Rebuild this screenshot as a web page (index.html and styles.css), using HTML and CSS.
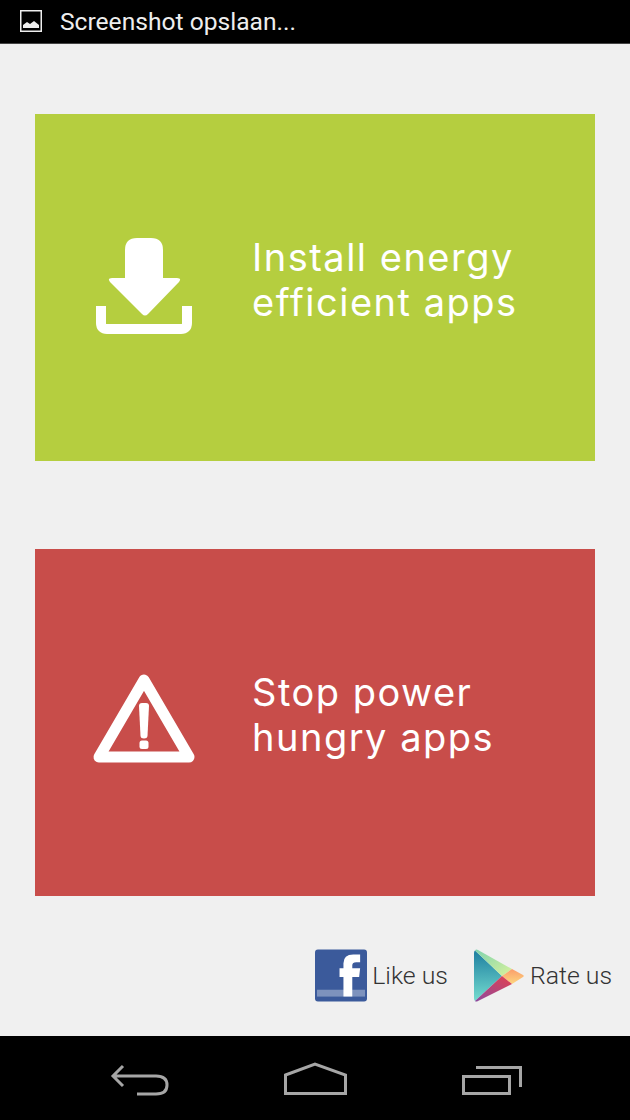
FILE: index.html
```html
<!DOCTYPE html>
<html lang="en">
<head>
  <meta charset="UTF-8">
  <title>Battery saver</title>
  <link rel="stylesheet" href="styles.css">
</head>
<body>

<div class="status-bar">
  <svg class="status-icon" width="22" height="22" viewBox="0 0 22 22">
    <rect x="0.75" y="0.75" width="20.5" height="20.5" fill="none" stroke="#eee" stroke-width="1.5"/>
    <path d="M3 18 V15 L7 12 L10 14 L14 11 L19 15 V18 Z" fill="#eee"/>
  </svg>
  <span class="status-text">Screenshot opslaan...</span>
</div>

<main class="content">
  <a class="tile tile-green">
    <svg class="tile-icon" width="110" height="110" viewBox="0 0 110 110">
      <path d="M35 17 Q35 5 47 5 H61 Q73 5 73 17 V45 H87 Q92 45 89 49 L58 81 Q55 84 52 81 L20 49 Q17 45 22 45 H35 Z" fill="#fff"/>
      <path d="M11 73 V90 Q11 96 17 96 H91 Q97 96 97 90 V73" fill="none" stroke="#fff" stroke-width="10"/>
    </svg>
    <span class="tile-text">Install energy<br>efficient apps</span>
  </a>

  <a class="tile tile-red">
    <svg class="tile-icon" width="110" height="110" viewBox="0 0 110 110">
      <polygon points="54,12 9,89 99,89" fill="none" stroke="#fff" stroke-width="11" stroke-linejoin="round"/>
      <path d="M49 38 Q49 35 52 35 H56 Q59 35 59 38 L57.500 68 Q57.200 70.500 54 70.500 Q50.800 70.500 50.500 68 Z" fill="#fff"/>
      <rect x="49.5" y="72.5" width="9" height="8.5" rx="2.5" fill="#fff"/>
    </svg>
    <span class="tile-text">Stop power<br>hungry apps</span>
  </a>

  <div class="social">
    <a class="social-link">
      <svg width="52" height="53" viewBox="0 0 53 53">
        <rect width="53" height="53" rx="3" fill="#3b5a9b"/>
        <rect x="2" y="41" width="49" height="7" fill="#7d92bd"/>
        <path d="M29 48 V28 H25 V19 H29 V14 Q29 5 39 5 H46 V13 H42 Q38 13 38 16 V19 H46 L45 28 H38 V48 Z" fill="#fff"/>
      </svg>
      <span class="social-text">Like us</span>
    </a>
    <a class="social-link">
      <svg width="51" height="53" viewBox="0 0 51 53">
        <defs>
          <linearGradient id="playBlue" x1="0" y1="0" x2="0" y2="1">
            <stop offset="0" stop-color="#1d7ea0"/>
            <stop offset="1" stop-color="#74dccf"/>
          </linearGradient>
          <linearGradient id="playGreen" x1="0" y1="0" x2="1" y2="1">
            <stop offset="0" stop-color="#7fd3ae"/>
            <stop offset="1" stop-color="#d8f29c"/>
          </linearGradient>
          <linearGradient id="playOrange" x1="0" y1="0" x2="0" y2="1">
            <stop offset="0" stop-color="#fb9d6b"/>
            <stop offset="1" stop-color="#fdd67f"/>
          </linearGradient>
          <linearGradient id="playRed" x1="1" y1="0" x2="0" y2="1">
            <stop offset="0" stop-color="#e2404f"/>
            <stop offset="1" stop-color="#8d4aa0"/>
          </linearGradient>
        </defs>
        <path d="M1 1.500 Q0 2 0 4 V49 Q0 51 1 52 L28 27 Z" fill="url(#playBlue)"/>
        <path d="M1 1.500 Q2 0 4 1 L38 20 L28 27 Z" fill="url(#playGreen)"/>
        <path d="M38 20 L49 26 Q50.500 27 49 28 L38 35 L28 27 Z" fill="url(#playOrange)"/>
        <path d="M1 52 Q2 53 4 52 L38 35 L28 27 Z" fill="url(#playRed)"/>
      </svg>
      <span class="social-text">Rate us</span>
    </a>
  </div>
</main>

<nav class="nav-bar">
  <svg width="60" height="36" viewBox="0 0 60 36">
    <path d="M13 4 L3 14 L13 24 M3 14 H46 Q57 14 57 23 Q57 32 46 32 H27" fill="none" stroke="#a6a6a6" stroke-width="3"/>
  </svg>
  <svg width="64" height="36" viewBox="0 0 64 36">
    <path d="M1.500 13 L31 2 L61.500 13 V31.500 H1.500 Z" fill="none" stroke="#a6a6a6" stroke-width="3"/>
  </svg>
  <svg width="60" height="36" viewBox="0 0 60 36">
    <path d="M1.500 14.500 H47.500 V31.500 H1.500 Z M14 5.500 H58.500 V25" fill="none" stroke="#a6a6a6" stroke-width="3"/>
  </svg>
</nav>

</body>
</html>
```

FILE: styles.css
```css
* {
  box-sizing: border-box;
}

body {
  margin: 0;
  width: 630px;
  height: 1120px;
  display: flex;
  flex-direction: column;
  background-color: #f0f0f0;
  font-family: Roboto, sans-serif;
}

.status-bar {
  height: 44px;
  display: flex;
  align-items: center;
  gap: 18px;
  padding: 0 0 1px 20px;
  background-color: #000;
  border-bottom: 1px solid #444;
}

.status-text {
  font-size: 24.6px;
  color: #eee;
}

.content {
  flex: 1;
  display: flex;
  flex-direction: column;
  padding: 70px 35px 0;
}

.tile {
  height: 347px;
  display: flex;
  align-items: center;
  gap: 52px;
  padding-left: 55px;
  color: #fff;
}

.tile-green {
  background-color: #b5ce3f;
}

.tile-red {
  margin-top: 88px;
  background-color: #c84d4a;
}

.tile-text {
  margin-bottom: 16px;
  font-family: Inter, sans-serif;
  font-size: 38px;
  font-weight: 400;
  line-height: 45px;
  letter-spacing: 1.5px;
}

.social {
  display: flex;
  justify-content: flex-end;
  gap: 26px;
  margin: 53px -17px 0 0;
}

.social-link {
  display: flex;
  align-items: center;
  gap: 5px;
}

.social-text {
  font-size: 24.8px;
  font-weight: 300;
  color: #333;
}

.nav-bar {
  height: 84px;
  display: flex;
  gap: 114px;
  padding: 26px 0 0 110px;
  background-color: #000;
}
```
